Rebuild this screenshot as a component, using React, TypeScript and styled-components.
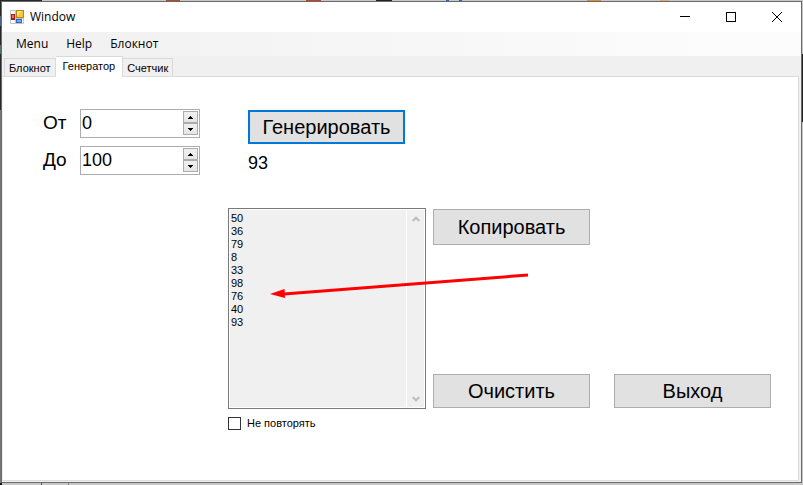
import React, { useState } from "react";
import styled, { createGlobalStyle, css } from "styled-components";

const uiFont = '"Open Sans", "Noto Sans", sans-serif';
const formFont = '"Liberation Sans", Arial, sans-serif';

const GlobalStyle = createGlobalStyle`
  * { box-sizing: border-box; }
  body { margin: 0; background: #c8c8c8; color: #000; font-family: ${formFont}; }
  button, input, textarea { font-family: inherit; color: inherit; margin: 0; }
`;

const Desktop = styled.div`
  display: flex;
  min-height: 100vh;
  padding: 1px 1px 2px;
  background:
    linear-gradient(#111, #111) 0 100% / 2px 2px no-repeat,
    linear-gradient(#555, #555) 41px 100% / 1px 2px no-repeat,
    linear-gradient(#888, #888) 68px 100% / 1px 2px no-repeat,
    linear-gradient(#bc4528, #bc4528) 166px 0 / 14px 1px no-repeat,
    linear-gradient(#bc4528, #bc4528) 306px 0 / 15px 1px no-repeat,
    linear-gradient(#222, #222) 376px 0 / 16px 1px no-repeat,
    linear-gradient(#1468d8, #1468d8) 446px 0 / 3px 1px no-repeat,
    linear-gradient(#1468d8, #1468d8) 459px 0 / 3px 1px no-repeat,
    linear-gradient(#d98d35, #d98d35) 587px 0 / 14px 1px no-repeat,
    linear-gradient(#e0a878, #e0a878) 660px 0 / 9px 1px no-repeat,
    linear-gradient(#272727, #272727) 0 0 / 42px 1px no-repeat,
    linear-gradient(#272727 0 16px, #4d6683 16px 26px, #272727 26px 45px, #53716a 45px 54px, #292929 54px 110px, #777 110px) 0 0 / 1px 100% no-repeat,
    linear-gradient(#c4c4c4 0 54px, #202020 54px 122px, #c8c8c8 122px) 100% 0 / 1px 100% no-repeat,
    #c8c8c8;
`;

const WindowFrame = styled.main`
  position: relative;
  display: flex;
  flex: 1;
  flex-direction: column;
  border: 1px solid #6a6a6a;
  background: #f0f0f0;
`;

const TitleBar = styled.header`
  display: flex;
  align-items: center;
  height: 30px;
  padding: 0 1px 0 8px;
  background: #fff;
  font: 12px/16px ${uiFont};
`;

const Title = styled.span`
  flex: 1;
  padding-left: 6px;
`;

const WindowButton = styled.button`
  display: grid;
  place-items: center;
  width: 46px;
  height: 30px;
  padding: 0;
  border: 0;
  background: transparent;
`;

const MenuBar = styled.nav`
  display: flex;
  align-items: center;
  gap: 18px;
  height: 24px;
  padding-left: 14px;
  background: linear-gradient(90deg, #f0f0f0, #fcfcfc 90%);
  font: 12px/16px ${uiFont};
`;

const MenuItem = styled.button`
  padding: 0;
  border: 0;
  background: transparent;
  font: inherit;
`;

const TabList = styled.div`
  display: flex;
  align-items: flex-end;
  height: 20px;
  padding-left: 2px;
`;

const Tab = styled.button<{ $active?: boolean }>`
  height: 18px;
  padding: 1px 4px 0;
  border: 1px solid #d9d9d9;
  border-bottom: 0;
  background: #f0f0f0;
  font-size: 11px;
  line-height: 16px;
  & + & { border-left: 0; }
  ${(p) =>
    p.$active &&
    css`
      z-index: 1;
      height: 21px;
      margin-bottom: -1px;
      padding: 0 7px 2px;
      background: #fff;
    `}
`;

const Panel = styled.section`
  flex: 1;
  margin: 0 2px 1px 0;
  padding: 32px 27px 48px 40px;
  border: 1px solid #dcdcdc;
  border-left-color: #f0f0f0;
  background: #fff;
`;

const TopRow = styled.div`
  display: flex;
  gap: 48px;
  height: 99px;
`;

const Fields = styled.div`
  display: grid;
  grid-template-columns: 29px 120px;
  grid-auto-rows: 29px;
  gap: 8px;
  align-content: start;
  padding-right: 0;
`;

const FieldLabel = styled.label`
  font-size: 19px;
  line-height: 28px;
  margin-right: -8px;
`;

const NumberBox = styled.div`
  display: flex;
  border: 1px solid #abadb3;
  background: #fff;
`;

const NumberInput = styled.input`
  flex: 1;
  min-width: 0;
  padding: 0 1px;
  border: 0;
  outline: 0;
  background: transparent;
  font-size: 18px;
`;

const Spinner = styled.div`
  display: grid;
  grid-template-rows: 1fr 1fr;
  width: 16px;
  padding: 1px 1px 2px 0;
`;

const SpinButton = styled.button`
  display: grid;
  place-items: center;
  padding: 0;
  border: 1px solid #acacac;
  background: linear-gradient(#f0f0f0, #e5e5e5);
`;

const Generator = styled.div`
  display: flex;
  flex-direction: column;
  gap: 8px;
  padding-top: 1px;
`;

const ActionButton = styled.button<{ $primary?: boolean; $tall?: boolean }>`
  width: 157px;
  height: ${(p) => (p.$tall ? 36 : 34)}px;
  padding: 0;
  border: ${(p) => (p.$primary ? "2px solid #0078d7" : "1px solid #adadad")};
  background: #e1e1e1;
  font-size: 20px;
  line-height: 24px;
`;

const Result = styled.output`
  font-size: 18px;
  line-height: 22px;
`;

const ResultsRow = styled.div`
  display: flex;
  align-items: flex-end;
  padding-left: 185px;
`;

const History = styled.div`
  display: flex;
  width: 198px;
  height: 201px;
  border: 1px solid #7a7a7a;
  background: #fff;
  padding: 1px;
`;

const HistoryText = styled.textarea`
  flex: 1;
  min-width: 0;
  padding: 2px 1px;
  border: 0;
  outline: 0;
  resize: none;
  overflow: hidden;
  background: #f0f0f0;
  font-size: 11px;
  line-height: 13px;
`;

const ScrollTrack = styled.div`
  display: flex;
  flex-direction: column;
  justify-content: space-between;
  width: 17px;
  margin-left: 1px;
  background: #f0f0f0;
`;

const ScrollButton = styled.button`
  display: grid;
  place-items: center;
  height: 17px;
  padding: 0;
  border: 0;
  background: transparent;
`;

const SideActions = styled.div`
  display: flex;
  flex-direction: column;
  justify-content: space-between;
  height: 199px;
  margin: 0 24px 1px 7px;
`;

const ExitSlot = styled.div`
  padding-bottom: 1px;
`;

const CheckLabel = styled.label`
  display: flex;
  align-items: center;
  gap: 6px;
  width: max-content;
  margin: 7px 0 0 185px;
  font-size: 11px;
  line-height: 14px;
`;

const CheckBox = styled.input`
  appearance: none;
  width: 13px;
  height: 13px;
  border: 1px solid #333;
  background: #fff;
  &:checked { background: #333; box-shadow: inset 0 0 0 2px #fff; }
`;

const Arrow = styled.svg`
  position: absolute;
  left: 268px;
  top: 270px;
  pointer-events: none;
`;

function AppIcon() {
  return (
    <svg width="14" height="14" viewBox="0 0 14 14" aria-hidden="true">
      <path d="M.5 .5h5v13h-5zM5.500 8.500h8v5h-8z" fill="#fff" stroke="#c2c2c2" />
      <rect x="1" y="4" width="4" height="6" fill="#aa1c12" />
      <rect x="2" y="5" width="2" height="3" fill="#e57565" />
      <rect x="6" y="9" width="6" height="4" fill="#2c66cc" />
      <rect x="7" y="10" width="4" height="2" fill="#72acf5" />
      <rect x="6.500" y=".5" width="7" height="7" fill="#f7c640" stroke="#b88710" />
      <path d="M7 1h5L7 6z" fill="#ffe48a" />
    </svg>
  );
}

function Caret({ down }: { down?: boolean }) {
  return (
    <svg width="5" height="3" viewBox="0 0 5 3" shapeRendering="crispEdges" aria-hidden="true">
      <path d={down ? "M0 0h5v1H4v1H3v1H2V2H1V1H0z" : "M2 0h1v1h1v1h1v1H0V2h1V1h1z"} />
    </svg>
  );
}

function Chevron({ down }: { down?: boolean }) {
  return (
    <svg width="8" height="6" viewBox="0 0 8 6" fill="none" stroke="#bdbdbd" strokeWidth="2" aria-hidden="true">
      <path d={down ? "M.7 1 4 4.300 7.300 1" : "M.7 5 4 1.700 7.300 5"} />
    </svg>
  );
}

interface NumberFieldProps {
  id: string;
  label: string;
  value: number;
  onChange: (value: number) => void;
}

function NumberField({ id, label, value, onChange }: NumberFieldProps) {
  return (
    <>
      <FieldLabel htmlFor={id}>{label}</FieldLabel>
      <NumberBox>
        <NumberInput
          id={id}
          inputMode="numeric"
          value={value}
          onChange={(e) => onChange(Number(e.target.value) || 0)}
        />
        <Spinner>
          <SpinButton aria-label={`${label} +`} onClick={() => onChange(value + 1)}><Caret /></SpinButton>
          <SpinButton aria-label={`${label} −`} onClick={() => onChange(value - 1)}><Caret down /></SpinButton>
        </Spinner>
      </NumberBox>
    </>
  );
}

export default function App() {
  const [from, setFrom] = useState(0);
  const [to, setTo] = useState(100);
  const [unique, setUnique] = useState(false);
  const [numbers, setNumbers] = useState([50, 36, 79, 8, 33, 98, 76, 40, 93]);
  const [last, setLast] = useState(93);

  const generate = () => {
    const next = from + Math.floor(Math.random() * (to - from));
    setLast(next);
    if (!unique || !numbers.includes(next)) setNumbers([...numbers, next]);
  };

  return (
    <>
      <GlobalStyle />
      <Desktop>
        <WindowFrame>
          <TitleBar>
            <AppIcon />
            <Title>Window</Title>
            <WindowButton aria-label="Minimize">
              <svg width="10" height="10" shapeRendering="crispEdges"><path d="M0 4h10v1H0z" /></svg>
            </WindowButton>
            <WindowButton aria-label="Maximize">
              <svg width="10" height="10" shapeRendering="crispEdges"><rect x=".5" y=".5" width="9" height="9" fill="none" stroke="#000" /></svg>
            </WindowButton>
            <WindowButton aria-label="Close">
              <svg width="10" height="10"><path d="M0 0l10 10M10 0L0 10" stroke="#000" /></svg>
            </WindowButton>
          </TitleBar>
          <MenuBar>
            <MenuItem>Menu</MenuItem>
            <MenuItem>Help</MenuItem>
            <MenuItem>Блокнот</MenuItem>
          </MenuBar>
          <TabList role="tablist">
            <Tab role="tab">Блокнот</Tab>
            <Tab role="tab" aria-selected $active>Генератор</Tab>
            <Tab role="tab">Счетчик</Tab>
          </TabList>
          <Panel role="tabpanel">
            <TopRow>
              <Fields>
                <NumberField id="from" label="От" value={from} onChange={setFrom} />
                <NumberField id="to" label="До" value={to} onChange={setTo} />
              </Fields>
              <Generator>
                <ActionButton $primary onClick={generate}>Генерировать</ActionButton>
                <Result>{last}</Result>
              </Generator>
            </TopRow>
            <ResultsRow>
              <History>
                <HistoryText readOnly aria-label="Числа" value={numbers.join("\n")} />
                <ScrollTrack>
                  <ScrollButton aria-label="Вверх"><Chevron /></ScrollButton>
                  <ScrollButton aria-label="Вниз"><Chevron down /></ScrollButton>
                </ScrollTrack>
              </History>
              <SideActions>
                <ActionButton $tall onClick={() => navigator.clipboard?.writeText(numbers.join("\n"))}>Копировать</ActionButton>
                <ActionButton onClick={() => setNumbers([])}>Очистить</ActionButton>
              </SideActions>
              <ExitSlot>
                <ActionButton>Выход</ActionButton>
              </ExitSlot>
            </ResultsRow>
            <CheckLabel>
              <CheckBox type="checkbox" checked={unique} onChange={(e) => setUnique(e.target.checked)} />
              Не повторять
            </CheckLabel>
          </Panel>
          <Arrow width="260" height="30" viewBox="0 0 260 30" aria-hidden="true">
            <path d="M14 22 258 3" stroke="#f00" strokeWidth="3" />
            <path d="M0 22 14.500 17 15 26z" fill="#f00" />
          </Arrow>
        </WindowFrame>
      </Desktop>
    </>
  );
}
